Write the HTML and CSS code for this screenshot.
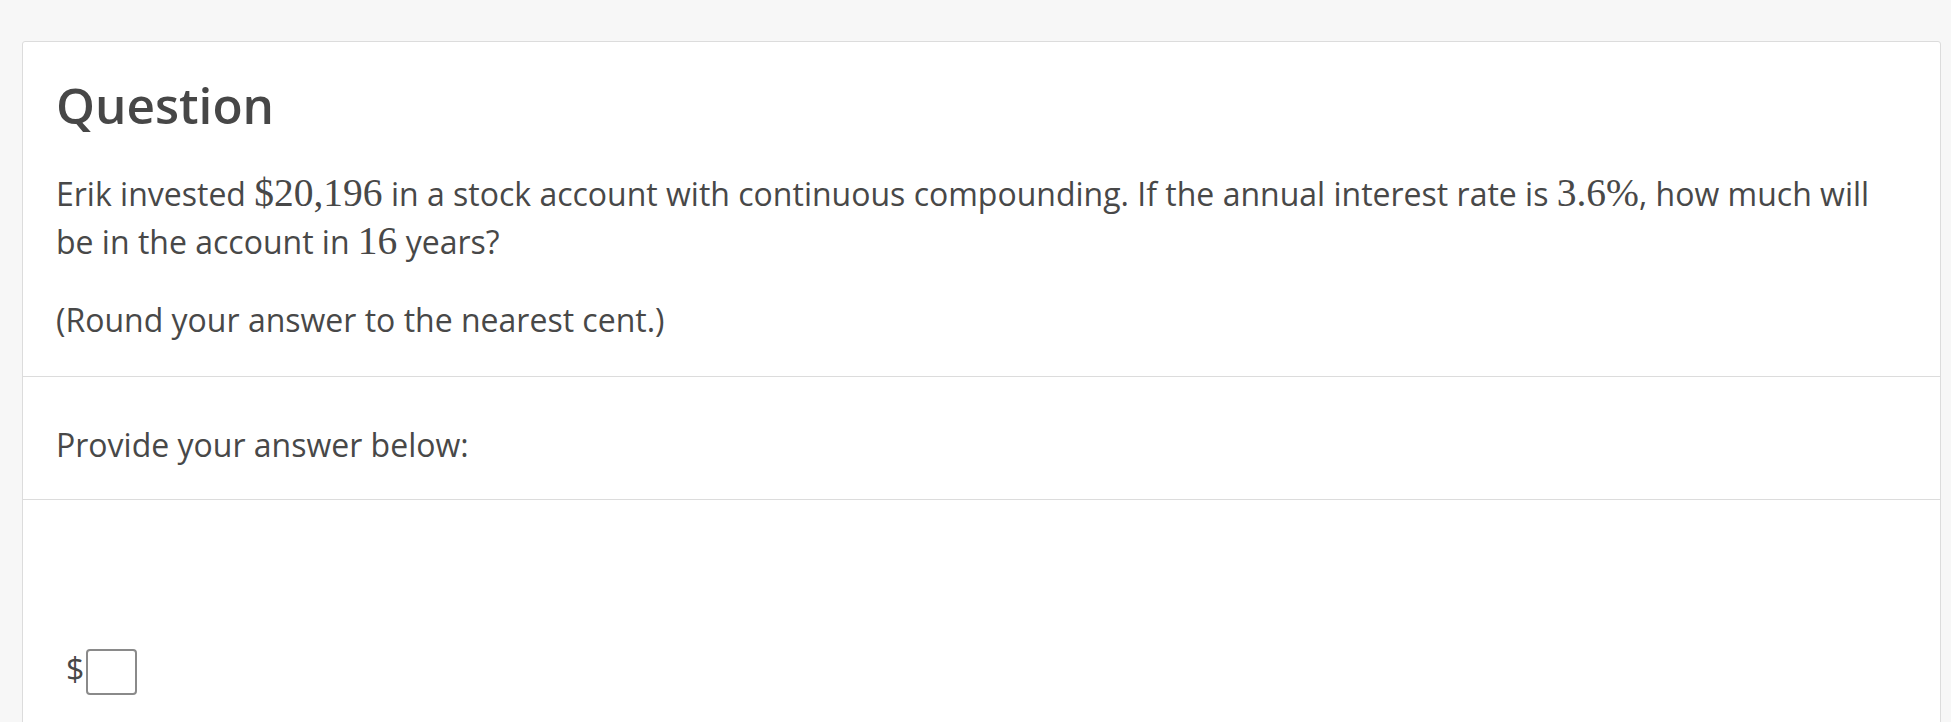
FILE: index.html
```html
<!DOCTYPE html>
<html lang="en">
<head>
<meta charset="utf-8">
<title>Question</title>
<link rel="stylesheet" href="styles.css">
</head>
<body>
<div class="card">
  <section class="section question">
    <h2 class="title">Question</h2>
    <p class="text">Erik invested <span class="math">$20,196</span> in a stock account with continuous compounding. If the annual interest rate is <span class="math">3.6%</span>, how much will be in the account in <span class="math">16</span> years?</p>
    <p class="text">(Round your answer to the nearest cent.)</p>
  </section>
  <section class="section prompt">
    <p class="text">Provide your answer below:</p>
  </section>
  <section class="section answer">
    <div class="answer-row">
      <span class="currency">$</span>
      <span class="answer-box"></span>
    </div>
  </section>
</div>
</body>
</html>
```

FILE: styles.css
```css
html, body {
  margin: 0;
  height: 100%;
}
body {
  background: #f7f7f7;
  padding: 41px 10px 0 22px;
  box-sizing: border-box;
  overflow: hidden;
  font-family: "Open Sans", "Noto Sans", sans-serif;
  color: #484848;
}
.card {
  background: #fff;
  border: 1px solid #dcdcdc;
  border-radius: 3px;
  min-height: 800px;
}
.section {
  padding: 0 33px;
}
.section + .section {
  border-top: 1px solid #dcdcdc;
}
.question {
  padding-top: 34px;
  padding-bottom: 32px;
}
.title {
  margin: 0 0 35px;
  font-size: 49.5px;
  font-weight: 600;
  line-height: 1.2;
  color: #474747;
}
.text {
  margin: 0 0 30px;
  font-size: 32px;
  line-height: 1.5;
}
.text:last-child {
  margin-bottom: 0;
}
.math {
  font-family: "Liberation Serif", "Times New Roman", serif;
  font-size: 39.5px;
  line-height: 1;
}
.prompt {
  padding-top: 44px;
  padding-bottom: 30px;
}
.answer {
  padding-top: 149px;
}
.answer-row {
  display: flex;
  align-items: center;
  padding-left: 10px;
}
.currency {
  font-size: 32px;
  line-height: 1;
  margin-right: 2px;
  margin-bottom: 6px;
}
.answer-box {
  display: block;
  width: 51px;
  height: 46px;
  box-sizing: border-box;
  border: 2px solid #8a8a8a;
  border-radius: 4px;
  background: #fff;
}
```
